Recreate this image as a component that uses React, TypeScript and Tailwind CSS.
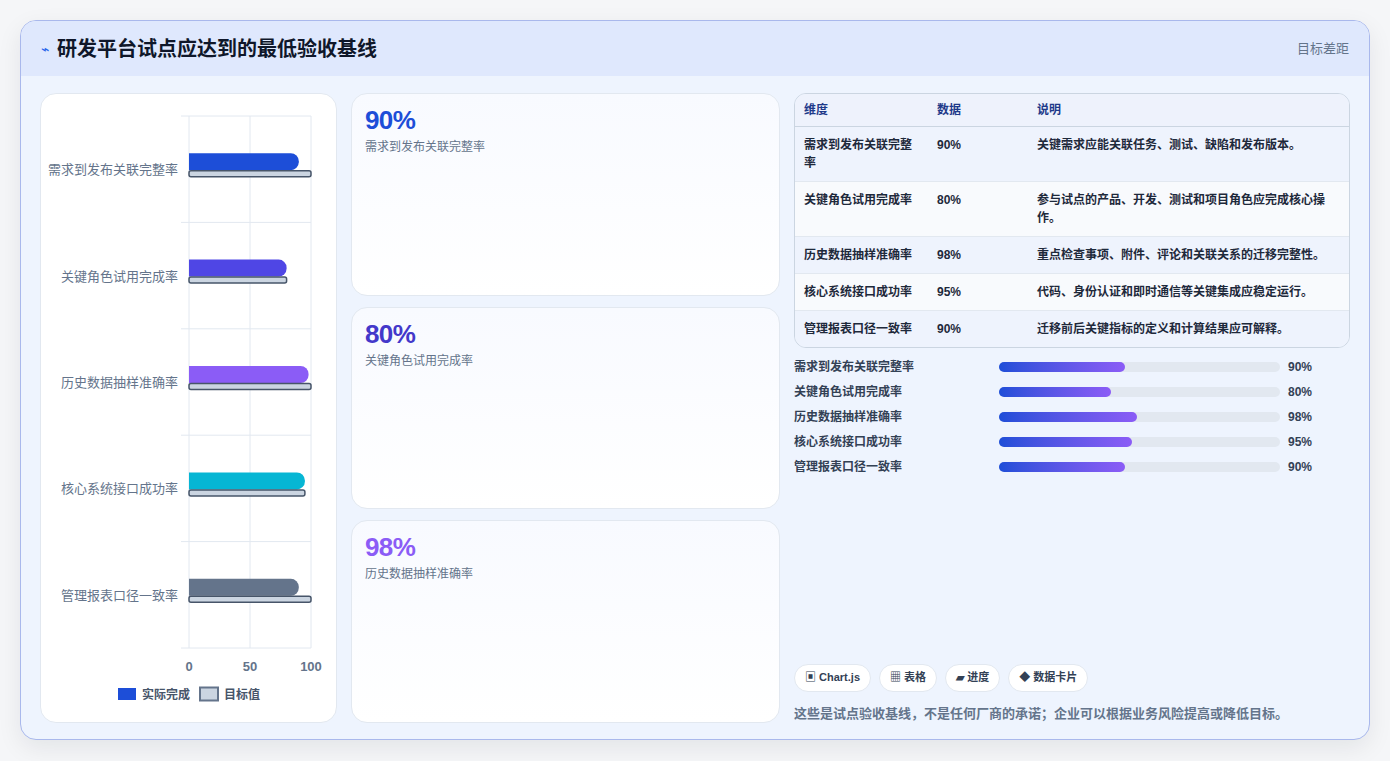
import React from "react";

const rows = [
  { name: "需求到发布关联完整率", v: 90, t: 100, c: "#1d4ed8", d: "关键需求应能关联任务、测试、缺陷和发布版本。" },
  { name: "关键角色试用完成率", v: 80, t: 80, c: "#4f46e5", d: "参与试点的产品、开发、测试和项目角色应完成核心操作。" },
  { name: "历史数据抽样准确率", v: 98, t: 100, c: "#8b5cf6", d: "重点检查事项、附件、评论和关联关系的迁移完整性。" },
  { name: "核心系统接口成功率", v: 95, t: 95, c: "#06b6d4", d: "代码、身份认证和即时通信等关键集成应稳定运行。" },
  { name: "管理报表口径一致率", v: 90, t: 100, c: "#64748b", d: "迁移前后关键指标的定义和计算结果应可解释。" },
];

const Chart = () => {
  const x0 = 148, w = 122, top = 22, rh = 106.4;
  return (
    <svg width="296" height="628" className="block">
      {[0, 50, 100].map((g) => (
        <line key={g} x1={x0 + (w * g) / 100} x2={x0 + (w * g) / 100} y1={top} y2={554} stroke="#e2e8f0" />
      ))}
      {[0, 1, 2, 3, 4, 5].map((i) => (
        <line key={i} x1={x0 - 8} x2={x0 + w} y1={top + i * rh} y2={top + i * rh} stroke="#e2e8f0" />
      ))}
      {rows.map((r, i) => {
        const cy = top + i * rh + rh / 2;
        return (
          <g key={r.name}>
            <text x={137} y={cy + 5} textAnchor="end" fontSize="13" fill="#64748b">{r.name}</text>
            <path d={`M${x0} ${cy - 16}h${(w * r.v) / 100 - 8}a8 8 0 0 1 8 8v1a8 8 0 0 1 -8 8h-${(w * r.v) / 100 - 8}z`} fill={r.c} />
            <rect x={x0} y={cy + 1.5} width={(w * r.t) / 100} height={6} rx={2} fill="#cbd5e1" stroke="#475569" strokeWidth="1.5" />
          </g>
        );
      })}
      {[0, 50, 100].map((g) => (
        <text key={g} x={x0 + (w * g) / 100} y={577} textAnchor="middle" fontSize="13" fontWeight="700" fill="#64748b">{g}</text>
      ))}
      <rect x={77} y={594} width={18} height={12} fill="#1d4ed8" />
      <text x={101} y={604.5} fontSize="12" fontWeight="700" fill="#475569">实际完成</text>
      <rect x={159} y={593.5} width={18} height={13} fill="#cbd5e1" stroke="#64748b" strokeWidth="2" />
      <text x={183} y={604.5} fontSize="12" fontWeight="700" fill="#475569">目标值</text>
    </svg>
  );
};

export default function App() {
  return (
    <div className="w-[1390px] h-[761px] bg-[#f5f6f8] p-5" style={{ fontFamily: '"Liberation Sans", "Noto Sans CJK SC", sans-serif' }}>
      <div className="h-[720px] rounded-2xl border border-[#a9b8ec] bg-[#eef4fe] overflow-hidden shadow-[0_8px_24px_rgba(15,23,42,0.08)] flex flex-col">
        <div className="h-[55px] bg-[#dfe8fd] flex items-center justify-between px-5 shrink-0">
          <div className="flex items-center gap-2">
            <span className="text-[#2563eb] text-sm">⌁</span>
            <span className="text-[20px] font-bold text-[#0f172a]">研发平台试点应达到的最低验收基线</span>
          </div>
          <span className="text-[13px] text-[#64748b]">目标差距</span>
        </div>
        <div className="flex-1 flex gap-[14px] px-[19px] pt-[17px] pb-[18px]">
          <div className="w-[297px] bg-white rounded-2xl border border-[#e2e8f0]"><Chart /></div>
          <div className="w-[429px] flex flex-col gap-[11px]">
            {rows.slice(0, 3).map((r, i) => (
              <div key={r.name} className="flex-1 rounded-2xl border border-[#e2e8f0] bg-gradient-to-b from-[#f8faff] to-white px-[13px] pt-[10px]">
                <div className="text-[26px] font-bold leading-[32px] tracking-tight" style={{ color: ["#1d4ed8", "#4338ca", "#8b5cf6"][i] }}>{r.v}%</div>
                <div className="text-[12px] text-[#64748b] mt-[2px]">{r.name}</div>
              </div>
            ))}
          </div>
          <div className="flex-1 flex flex-col">
            <div className="rounded-xl border border-[#cbd5e1] overflow-hidden text-[12px]">
              <div className="flex bg-[#eef2fc] h-[33px] items-center font-bold text-[#1e3a8a] border-b border-[#cbd5e1]">
                <div className="w-[133px] pl-[9px]">维度</div>
                <div className="w-[100px] pl-[9px]">数据</div>
                <div className="flex-1 pl-[9px]">说明</div>
              </div>
              {rows.map((r, i) => (
                <div key={r.name} className={`flex py-[9px] leading-[18px] text-[#1e293b] font-bold ${i % 2 ? "bg-[#f8fafd]" : "bg-[#eef3fd]"} ${i < 4 ? "border-b border-[#e2e8f0]" : ""}`}>
                  <div className="w-[133px] pl-[9px] pr-2">{r.name}</div>
                  <div className="w-[100px] pl-[9px]">{r.v}%</div>
                  <div className="flex-1 pl-[9px] pr-3 font-semibold">{r.d}</div>
                </div>
              ))}
            </div>
            <div className="mt-[10px] flex flex-col gap-[7px]">
              {rows.map((r) => (
                <div key={r.name} className="flex items-center h-[18px] text-[12px] font-bold text-[#334155]">
                  <div className="w-[205px]">{r.name}</div>
                  <div className="w-[281px] h-[10px] rounded-full bg-[#e2e8f0]">
                    <div className="h-full rounded-full bg-gradient-to-r from-[#1d4ed8] to-[#8b5cf6]" style={{ width: `${r.v / 2}%` }} />
                  </div>
                  <div className="ml-2">{r.v}%</div>
                </div>
              ))}
            </div>
            <div className="flex-1" />
            <div className="flex gap-2 text-[11px] font-bold text-[#334155]">
              {["▣ Chart.js", "▦ 表格", "▰ 进度", "◆ 数据卡片"].map((c) => (
                <span key={c} className="bg-white border border-[#e2e8f0] rounded-full px-[10px] h-[28px] flex items-center">{c}</span>
              ))}
            </div>
            <div className="mt-[12px] text-[13px] text-[#64748b] font-semibold">这些是试点验收基线，不是任何厂商的承诺；企业可以根据业务风险提高或降低目标。</div>
          </div>
        </div>
      </div>
    </div>
  );
}
